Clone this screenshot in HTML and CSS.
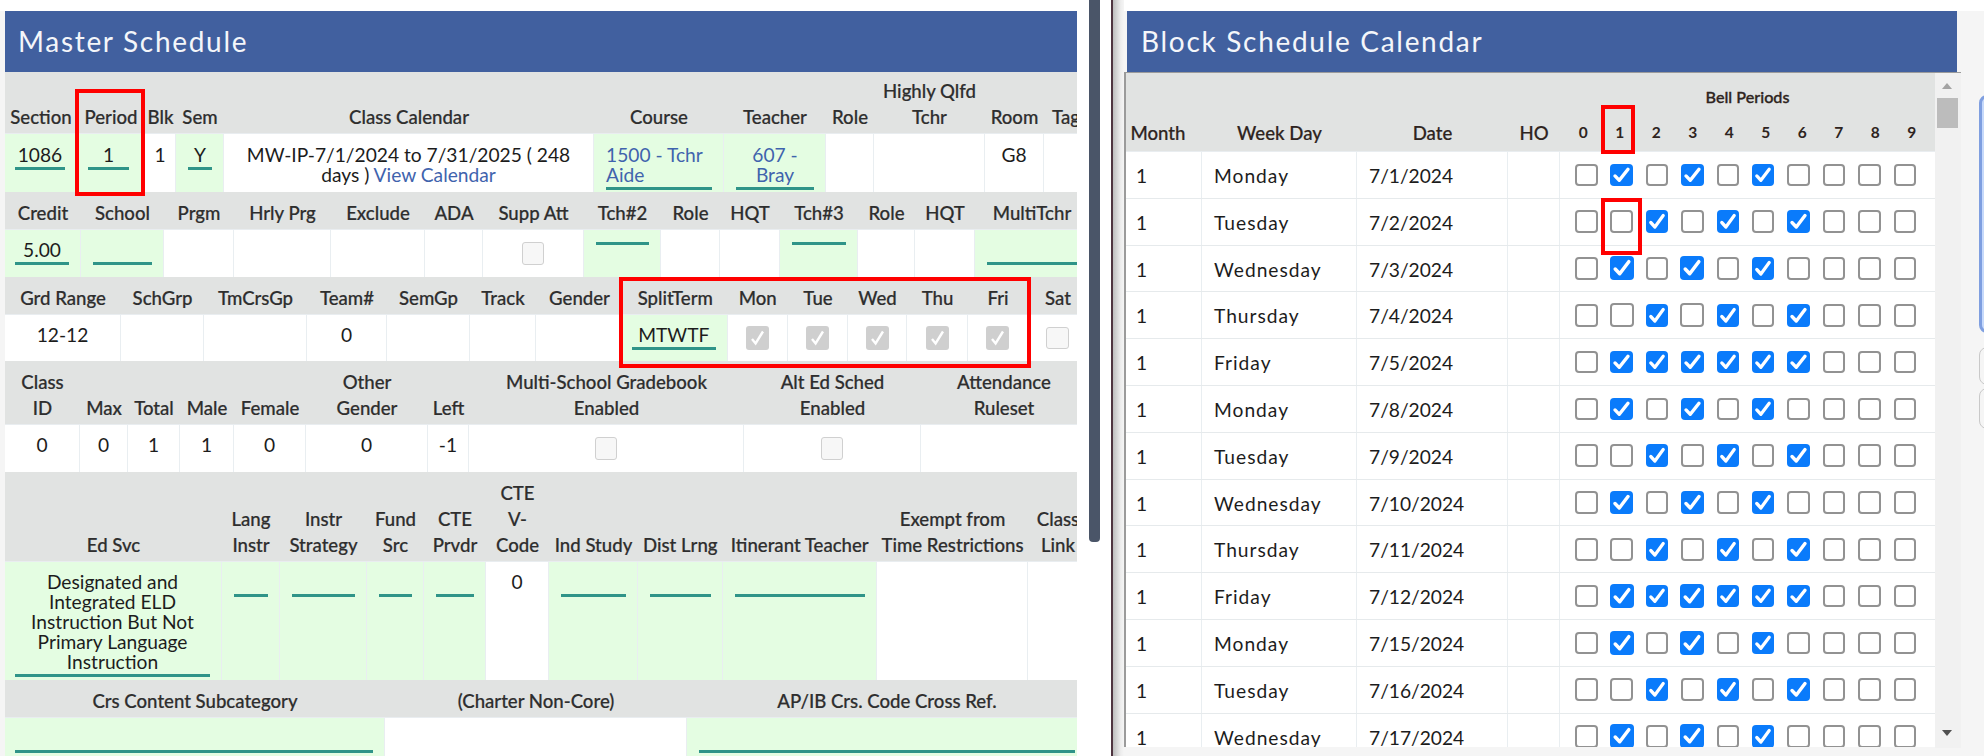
FILE: index.html
```html
<!DOCTYPE html>
<html lang="en">
<head>
<meta charset="utf-8">
<title>Master Schedule</title>
<link rel="stylesheet" href="styles.css">
</head>
<body>
<div class="page">
  <section class="left">
    <div class="strip"></div>
    <div class="panel">
      <h1 class="title">Master Schedule</h1>
      <div class="sheet">
        <div class="grid g1 hr h62">
          <div class="h">Section</div><div class="h">Period</div><div class="h">Blk</div><div class="h">Sem</div><div class="h">Class Calendar</div><div class="h">Course</div><div class="h">Teacher</div><div class="h">Role</div><div class="h">Highly Qlfd<br>Tchr</div><div class="h">Room</div><div class="h">Tag</div>
        </div>
        <div class="grid g1 dr d58">
          <div class="c g"><span class="f first">1086</span></div><div class="c g"><span class="f wr">1</span></div><div class="c">1</div><div class="c g"><span class="f">Y</span></div><div class="c">MW-IP-7/1/2024 to 7/31/2025 ( 248<br>days ) <a class="link">View Calendar</a></div><div class="c g"><span class="f lnk la">1500 - Tchr<br>Aide</span></div><div class="c g"><span class="f lnk">607 -<br>Bray</span></div><div class="c"></div><div class="c"></div><div class="c">G8</div><div class="c"></div>
        </div>
        <div class="grid g2 hr h38">
          <div class="h">Credit</div><div class="h">School</div><div class="h">Prgm</div><div class="h">Hrly Prg</div><div class="h">Exclude</div><div class="h">ADA</div><div class="h">Supp Att</div><div class="h">Tch#2</div><div class="h">Role</div><div class="h">HQT</div><div class="h">Tch#3</div><div class="h">Role</div><div class="h">HQT</div><div class="h">MultiTchr</div>
        </div>
        <div class="grid g2 dr d47">
          <div class="c g"><span class="f first">5.00</span></div><div class="c g"><span class="f tall"></span></div><div class="c"></div><div class="c"></div><div class="c"></div><div class="c"></div><div class="c ck"><input class="lock" type="checkbox" disabled></div><div class="c g"><span class="f"></span></div><div class="c"></div><div class="c"></div><div class="c g"><span class="f"></span></div><div class="c"></div><div class="c"></div><div class="c g"><span class="f tall"></span></div>
        </div>
        <div class="grid g3 hr h38">
          <div class="h">Grd Range</div><div class="h">SchGrp</div><div class="h">TmCrsGp</div><div class="h">Team#</div><div class="h">SemGp</div><div class="h">Track</div><div class="h">Gender</div><div class="h">SplitTerm</div><div class="h">Mon</div><div class="h">Tue</div><div class="h">Wed</div><div class="h">Thu</div><div class="h">Fri</div><div class="h">Sat</div>
        </div>
        <div class="grid g3 dr d46">
          <div class="c">12-12</div><div class="c"></div><div class="c"></div><div class="c">0</div><div class="c"></div><div class="c"></div><div class="c"></div><div class="c g"><span class="f mt">MTWTF</span></div><div class="c ck"><input class="lock" type="checkbox" checked disabled></div><div class="c ck"><input class="lock" type="checkbox" checked disabled></div><div class="c ck"><input class="lock" type="checkbox" checked disabled></div><div class="c ck"><input class="lock" type="checkbox" checked disabled></div><div class="c ck"><input class="lock" type="checkbox" checked disabled></div><div class="c ck"><input class="lock" type="checkbox" disabled></div>
        </div>
        <div class="grid g4 hr h64">
          <div class="h">Class<br>ID</div><div class="h">Max</div><div class="h">Total</div><div class="h">Male</div><div class="h">Female</div><div class="h">Other<br>Gender</div><div class="h">Left</div><div class="h">Multi-School Gradebook<br>Enabled</div><div class="h">Alt Ed Sched<br>Enabled</div><div class="h">Attendance<br>Ruleset</div>
        </div>
        <div class="grid g4 dr d47">
          <div class="c">0</div><div class="c">0</div><div class="c">1</div><div class="c">1</div><div class="c">0</div><div class="c">0</div><div class="c">-1</div><div class="c ck"><input class="lock" type="checkbox" disabled></div><div class="c ck"><input class="lock" type="checkbox" disabled></div><div class="c"></div>
        </div>
        <div class="grid g5 hr h90">
          <div class="h">Ed Svc</div><div class="h">Lang<br>Instr</div><div class="h">Instr<br>Strategy</div><div class="h">Fund<br>Src</div><div class="h">CTE<br>Prvdr</div><div class="h">CTE<br>V-<br>Code</div><div class="h">Ind Study</div><div class="h">Dist Lrng</div><div class="h">Itinerant Teacher</div><div class="h">Exempt from<br>Time Restrictions</div><div class="h">Class<br>Link</div>
        </div>
        <div class="grid g5 dr d118">
          <div class="c g"><span class="f first">Designated and<br>Integrated ELD<br>Instruction But Not<br>Primary Language<br>Instruction</span></div><div class="c g"><span class="f tall"></span></div><div class="c g"><span class="f tall"></span></div><div class="c g"><span class="f tall"></span></div><div class="c g"><span class="f tall"></span></div><div class="c">0</div><div class="c g"><span class="f tall"></span></div><div class="c g"><span class="f tall"></span></div><div class="c g"><span class="f tall"></span></div><div class="c"></div><div class="c"></div>
        </div>
        <div class="grid g6 hr h38">
          <div class="h">Crs Content Subcategory</div><div class="h">(Charter Non-Core)</div><div class="h">AP/IB Crs. Code Cross Ref.</div>
        </div>
        <div class="grid g6 dr d47">
          <div class="c g"><span class="f first tall"></span></div><div class="c"></div><div class="c g"><span class="f tall"></span></div>
        </div>
      </div>
    </div>
    <div class="vbar"></div>
  </section>
  <div class="rule"></div>
  <div class="shade"></div>
  <section class="right">
    <div class="topgap"></div>
    <h2 class="title title-r">Block Schedule Calendar</h2>
    <div class="box">
      <div class="cal">
        <div class="cal-head">
          <div class="ch">Month</div><div class="ch">Week Day</div><div class="ch">Date</div><div class="ch">HO</div>
          <div class="bells">
            <div class="bell-title">Bell Periods</div>
            <div class="digits"><span>0</span><span>1</span><span>2</span><span>3</span><span>4</span><span>5</span><span>6</span><span>7</span><span>8</span><span>9</span></div>
          </div>
        </div>
        <div class="row"><div class="rc">1</div><div class="rc">Monday</div><div class="rc">7/1/2024</div><div class="rc"></div><div class="boxes"><input type="checkbox"><input type="checkbox" checked><input type="checkbox"><input type="checkbox" checked><input type="checkbox"><input type="checkbox" checked><input type="checkbox"><input type="checkbox"><input type="checkbox"><input type="checkbox"></div></div>
        <div class="row"><div class="rc">1</div><div class="rc">Tuesday</div><div class="rc">7/2/2024</div><div class="rc"></div><div class="boxes"><input type="checkbox"><input type="checkbox"><input type="checkbox" checked><input type="checkbox"><input type="checkbox" checked><input type="checkbox"><input type="checkbox" checked><input type="checkbox"><input type="checkbox"><input type="checkbox"></div></div>
        <div class="row wide"><div class="rc">1</div><div class="rc">Wednesday</div><div class="rc">7/3/2024</div><div class="rc"></div><div class="boxes"><input type="checkbox"><input type="checkbox" checked><input type="checkbox"><input type="checkbox" checked><input type="checkbox"><input type="checkbox" checked><input type="checkbox"><input type="checkbox"><input type="checkbox"><input type="checkbox"></div></div>
        <div class="row wide"><div class="rc">1</div><div class="rc">Thursday</div><div class="rc">7/4/2024</div><div class="rc"></div><div class="boxes"><input type="checkbox"><input type="checkbox"><input type="checkbox" checked><input type="checkbox"><input type="checkbox" checked><input type="checkbox"><input type="checkbox" checked><input type="checkbox"><input type="checkbox"><input type="checkbox"></div></div>
        <div class="row"><div class="rc">1</div><div class="rc">Friday</div><div class="rc">7/5/2024</div><div class="rc"></div><div class="boxes"><input type="checkbox"><input type="checkbox" checked><input type="checkbox" checked><input type="checkbox" checked><input type="checkbox" checked><input type="checkbox" checked><input type="checkbox" checked><input type="checkbox"><input type="checkbox"><input type="checkbox"></div></div>
        <div class="row"><div class="rc">1</div><div class="rc">Monday</div><div class="rc">7/8/2024</div><div class="rc"></div><div class="boxes"><input type="checkbox"><input type="checkbox" checked><input type="checkbox"><input type="checkbox" checked><input type="checkbox"><input type="checkbox" checked><input type="checkbox"><input type="checkbox"><input type="checkbox"><input type="checkbox"></div></div>
        <div class="row"><div class="rc">1</div><div class="rc">Tuesday</div><div class="rc">7/9/2024</div><div class="rc"></div><div class="boxes"><input type="checkbox"><input type="checkbox"><input type="checkbox" checked><input type="checkbox"><input type="checkbox" checked><input type="checkbox"><input type="checkbox" checked><input type="checkbox"><input type="checkbox"><input type="checkbox"></div></div>
        <div class="row"><div class="rc">1</div><div class="rc">Wednesday</div><div class="rc">7/10/2024</div><div class="rc"></div><div class="boxes"><input type="checkbox"><input type="checkbox" checked><input type="checkbox"><input type="checkbox" checked><input type="checkbox"><input type="checkbox" checked><input type="checkbox"><input type="checkbox"><input type="checkbox"><input type="checkbox"></div></div>
        <div class="row"><div class="rc">1</div><div class="rc">Thursday</div><div class="rc">7/11/2024</div><div class="rc"></div><div class="boxes"><input type="checkbox"><input type="checkbox"><input type="checkbox" checked><input type="checkbox"><input type="checkbox" checked><input type="checkbox"><input type="checkbox" checked><input type="checkbox"><input type="checkbox"><input type="checkbox"></div></div>
        <div class="row wide"><div class="rc">1</div><div class="rc">Friday</div><div class="rc">7/12/2024</div><div class="rc"></div><div class="boxes"><input type="checkbox"><input type="checkbox" checked><input type="checkbox" checked><input type="checkbox" checked><input type="checkbox" checked><input type="checkbox" checked><input type="checkbox" checked><input type="checkbox"><input type="checkbox"><input type="checkbox"></div></div>
        <div class="row wide"><div class="rc">1</div><div class="rc">Monday</div><div class="rc">7/15/2024</div><div class="rc"></div><div class="boxes"><input type="checkbox"><input type="checkbox" checked><input type="checkbox"><input type="checkbox" checked><input type="checkbox"><input type="checkbox" checked><input type="checkbox"><input type="checkbox"><input type="checkbox"><input type="checkbox"></div></div>
        <div class="row"><div class="rc">1</div><div class="rc">Tuesday</div><div class="rc">7/16/2024</div><div class="rc"></div><div class="boxes"><input type="checkbox"><input type="checkbox"><input type="checkbox" checked><input type="checkbox"><input type="checkbox" checked><input type="checkbox"><input type="checkbox" checked><input type="checkbox"><input type="checkbox"><input type="checkbox"></div></div>
        <div class="row wide"><div class="rc">1</div><div class="rc">Wednesday</div><div class="rc">7/17/2024</div><div class="rc"></div><div class="boxes"><input type="checkbox"><input type="checkbox" checked><input type="checkbox"><input type="checkbox" checked><input type="checkbox"><input type="checkbox" checked><input type="checkbox"><input type="checkbox"><input type="checkbox"><input type="checkbox"></div></div>
      </div>
      <div class="sbar">
        <span class="arrow-up"></span>
        <span class="thumb"></span>
        <span class="arrow-down"></span>
      </div>
    </div>
  </section>
</div>
<div class="mark mark-period"></div>
<div class="mark mark-days"></div>
<div class="mark mark-bell"></div>
<div class="mark mark-box"></div>
<div class="edge edge-blue"></div>
<div class="edge edge-a"></div>
<div class="edge edge-b"></div>
</body>
</html>
```

FILE: styles.css
```css
* { box-sizing: border-box; }
html, body { margin: 0; padding: 0; }
body {
  position: relative;
  width: 1984px;
  height: 756px;
  overflow: hidden;
  background: #f5f5f5;
  font-family: "Lato", "Liberation Sans", sans-serif;
  color: #1c1c1c;
}
.page { display: flex; width: 1984px; height: 756px; overflow: hidden; }

/* left pane */
.left { display: flex; width: 1111px; height: 756px; background: #fff; flex: none; }
.strip { width: 5px; margin-top: 11px; background: #f5f5f5; flex: none; }
.panel { width: 1072px; margin-top: 11px; overflow: hidden; background: #fff; flex: none; }
.title {
  margin: 0;
  height: 61px;
  padding-left: 13px;
  background: #41609f;
  color: #f4f6fa;
  font-size: 28px;
  font-weight: 400;
  line-height: 61px;
  letter-spacing: 1.7px;
}
.sheet { width: 1084px; }
.vbar { width: 11px; height: 542px; margin-left: 12px; background: #4a5568; border-radius: 0 0 4px 4px; flex: none; }
.rule { width: 2px; height: 756px; background: #4f3540; flex: none; }
.shade { width: 11px; height: 756px; background: linear-gradient(90deg, #bdbdbd, #ededed 70%, #f5f5f5); flex: none; }

/* schedule grids */
.grid { display: grid; }
.g1 { grid-template-columns: 72px 68px 31px 48px 370px 130px 102px 48px 111px 59px 44px; }
.g2 { grid-template-columns: 76px 83px 70px 97px 94px 58px 101px 77px 59px 60px 78px 57px 60px 114px; }
.g3 { grid-template-columns: 116px 83px 103px 80px 83px 66px 87px 104.5px 60.5px 60px 59px 61px 60px 60px; }
.g4 { grid-template-columns: 75px 48px 52px 54px 72px 122px 41px 275px 177px 166px; }
.g5 { grid-template-columns: 217px 58px 87px 57px 62px 63px 89px 84.5px 154.5px 151px 60px; }
.g6 { grid-template-columns: 380px 302px 400px; }
.hr { background: #e1e3e2; border-bottom: 1px solid #e9edf0; }
.h38 { height: 38px; }
.h62 { height: 62px; }
.h64 { height: 64px; }
.h90 { height: 90px; }
.d46 { height: 46px; }
.d47 { height: 47px; }
.d58 { height: 58px; }
.d118 { height: 118px; }
.h {
  align-self: end;
  padding-bottom: 3px;
  font-size: 18.6px;
  font-weight: 500;
  line-height: 26px;
  text-align: center;
  white-space: nowrap;
  color: #2e2e2e;
  -webkit-text-stroke: 0.2px #2e2e2e;
}
.c {
  padding-top: 10px;
  border-right: 1px solid #e9eef1;
  background: #fff;
  font-size: 19.2px;
  line-height: 20px;
  text-align: center;
  white-space: nowrap;
}
.c.g { background: #e4fde2; }
.c.ck { display: flex; align-items: center; justify-content: center; padding-top: 0; }
.d58 .c { padding-top: 11px; }
.f { display: block; margin: 0 11px 0 12px; padding-bottom: 1.5px; border-bottom: 3px solid #2f9488; }
.f.first { margin-left: 10px; }
.f.wr { margin: 0 15px 0 11px; }
.f.mt { margin: 0 11px 0 9px; }
.f.tall { height: 24.5px; }
.f.lnk { color: #3f63ad; }
.f.la { text-align: left; }
.link { color: #3f63ad; }

/* checkboxes */
input[type="checkbox"] {
  appearance: none;
  -webkit-appearance: none;
  display: block;
  margin: 0;
  width: 22.5px;
  height: 22.5px;
  flex: none;
  background: #fff;
  border: 2px solid #929292;
  border-radius: 4px;
}
input[type="checkbox"]:checked {
  background: #0a7bfb url("data:image/svg+xml,%3Csvg xmlns='http://www.w3.org/2000/svg' viewBox='0 0 23 23'%3E%3Cpath d='M5 12.5l4.3 4.5L18 5.5' fill='none' stroke='%23fff' stroke-width='3.4' stroke-linecap='round' stroke-linejoin='round'/%3E%3C/svg%3E") center / 100% 100% no-repeat;
  border: 0;
}
input.lock, input[type="checkbox"].lock { background: #f7f7f7; border: 1px solid #d0d0d0; border-radius: 3px; }
input[type="checkbox"].lock:checked {
  width: 23px;
  height: 24px;
  background: #cfcfcf url("data:image/svg+xml,%3Csvg xmlns='http://www.w3.org/2000/svg' viewBox='0 0 23 23'%3E%3Cpath d='M6 12.5l3.6 4.5L17 5' fill='none' stroke='%23fff' stroke-width='2.4'/%3E%3C/svg%3E") center / 100% 100% no-repeat;
  border: 0;
}

/* right pane */
.right { width: 860px; height: 756px; flex: none; }
.topgap { height: 11px; background: #fff; }
.title-r { width: 830px; margin-left: 3px; padding-left: 14px; }
.box {
  display: flex;
  width: 837px;
  height: 675px;
  border-top: 1px solid #9b9b9b;
  border-left: 2px solid #9b9b9b;
  background: #f5f5f5;
}
.cal { width: 809px; height: 674px; overflow: hidden; flex: none; background: #fff; }
.cal-head { display: grid; grid-template-columns: 76px 155px 151px 52px 375px; height: 79px; background: #e1e3e2; border-bottom: 1px solid #e9edf0; }
.ch { align-self: end; padding-bottom: 5px; font-size: 18.6px; font-weight: 500; line-height: 26px; text-align: center; color: #2e2420; -webkit-text-stroke: 0.2px #2e2420; }
.ch:first-child { padding-right: 12px; }
.bells { display: flex; flex-direction: column; align-items: stretch; }
.bell-title { margin-top: 14px; font-size: 16.2px; font-weight: 500; line-height: 20px; text-align: center; color: #2e2420; -webkit-text-stroke: 0.35px #2e2420; }
.digits { display: grid; grid-template-columns: repeat(10, 36.5px); margin: 15px 0 0 5px; }
.digits span { font-size: 15.5px; font-weight: 700; line-height: 20px; text-align: center; color: #2e2420; }
.row { display: grid; grid-template-columns: 76px 155px 151px 52px 375px; height: 46.8px; border-bottom: 1px solid #e6eaec; }
.rc { padding: 14px 0 0 12px; border-right: 1px solid #e9eef1; font-size: 19.2px; line-height: 20px; }
.rc:first-child { padding-left: 10px; }
.rc:nth-child(2) { letter-spacing: 1px; }
.boxes { display: flex; align-items: center; gap: 12.9px; padding-left: 15px; }
.row.wide input:nth-child(2), .row.wide input:nth-child(4) { width: 24px; height: 24px; margin: 0 -0.75px; }

/* scrollbar */
.sbar { position: relative; width: 26px; height: 675px; background: #f1f1f1; flex: none; }
.arrow-up { position: absolute; top: 10px; left: 7px; width: 0; height: 0; border: 5.5px solid transparent; border-top: 0; border-bottom: 6px solid #a3a3a3; }
.thumb { position: absolute; top: 25px; left: 2px; width: 21px; height: 30px; background: #bcbcbc; }
.arrow-down { position: absolute; top: 657px; left: 7px; width: 0; height: 0; border: 5.5px solid transparent; border-bottom: 0; border-top: 6px solid #505050; }

/* annotations laid over the shot */
.mark { position: absolute; border: 4px solid #f00; }
.mark-period { left: 75px; top: 89px; width: 70px; height: 107px; }
.mark-days { left: 619px; top: 277px; width: 412px; height: 91px; }
.mark-bell { left: 1601px; top: 105px; width: 34px; height: 49px; }
.mark-box { left: 1601px; top: 198px; width: 41px; height: 57px; }

/* window edge pieces */
.edge { position: absolute; left: 1979px; width: 30px; border-radius: 8px; }
.edge-blue { top: 95px; height: 238px; background: #c6d9fb; border: 3px solid #7f9fe0; }
.edge-a { top: 347px; height: 38px; border: 1px solid #c9c9c9; }
.edge-b { top: 388px; height: 41px; border: 1px solid #c9c9c9; }
```
